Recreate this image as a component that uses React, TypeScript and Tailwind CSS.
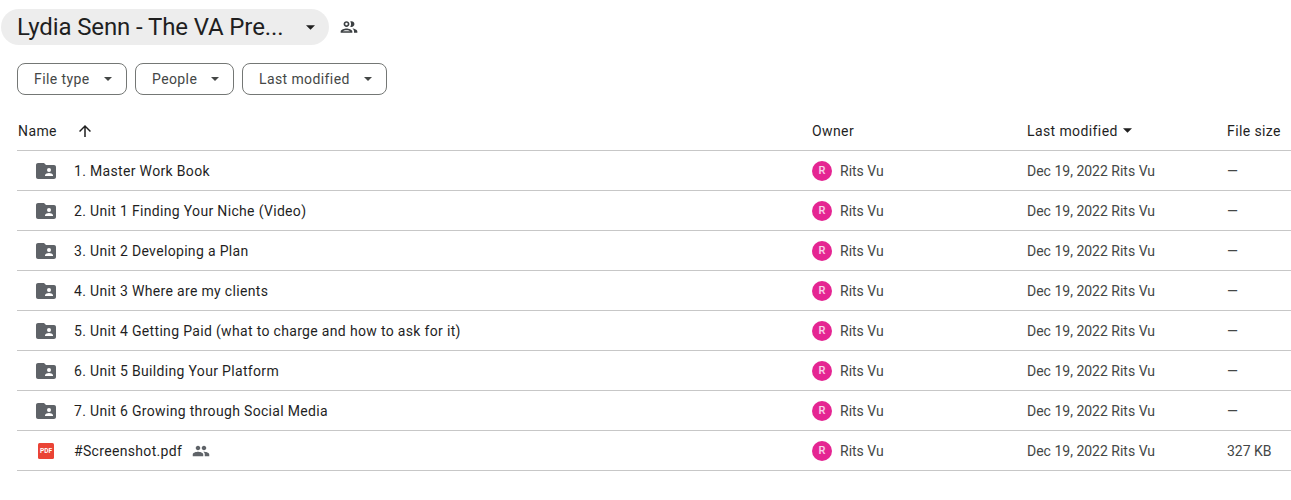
const rows = [
    "1. Master Work Book",
    "2. Unit 1 Finding Your Niche (Video)",
    "3. Unit 2 Developing a Plan",
    "4. Unit 3 Where are my clients",
    "5. Unit 4 Getting Paid (what to charge and how to ask for it)",
    "6. Unit 5 Building Your Platform",
    "7. Unit 6 Growing through Social Media",
];

function Caret({ className }: { className: string }) {
    return (
        <svg viewBox="0 0 10 5" className={className} fill="currentColor">
            <path d="M0 0l5 5 5-5z" />
        </svg>
    );
}

function FolderIcon() {
    return (
        <svg viewBox="0 0 20 16" className="w-5 h-4 text-[#5f6368]">
            <path fill="currentColor" d="M2 0h6l2 2h8c1.1 0 2 .9 2 2v10c0 1.1-.9 2-2 2H2c-1.1 0-2-.9-2-2V2C0 .9.9 0 2 0z" />
            <circle cx="13" cy="7" r="2" fill="#fff" />
            <path fill="#fff" d="M9 12.2c0-1.4 2.7-2.2 4-2.2s4 .8 4 2.2V13H9z" />
        </svg>
    );
}

function PdfIcon() {
    return (
        <svg viewBox="0 0 16 16" className="w-4 h-4">
            <rect width="16" height="16" rx="1.5" fill="#ea4335" />
            <text x="8" y="10.4" textAnchor="middle" fontSize="6.6" fontWeight="700" fill="#fff" fontFamily="Roboto, sans-serif">PDF</text>
        </svg>
    );
}

function PeopleFilled() {
    return (
        <svg viewBox="0 0 24 24" className="w-[18px] h-[18px] text-[#5f6368]" fill="currentColor">
            <path d="M16 11c1.66 0 2.99-1.34 2.99-3S17.66 5 16 5s-3 1.34-3 3 1.34 3 3 3zm-8 0c1.66 0 2.99-1.34 2.99-3S9.66 5 8 5 5 6.34 5 8s1.34 3 3 3zm0 2c-2.33 0-7 1.17-7 3.5V19h14v-2.5C15 14.17 10.33 13 8 13zm8 0c-.29 0-.62.02-.97.05 1.16.84 1.97 1.97 1.97 3.45V19h6v-2.5c0-2.33-4.67-3.5-7-3.5z" />
        </svg>
    );
}

function PeopleOutline() {
    return (
        <svg viewBox="0 0 24 24" className="w-5 h-5 text-[#3c4043]" fill="currentColor">
            <path d="M9 13.75c-2.34 0-7 1.17-7 3.5V19h14v-1.75c0-2.33-4.66-3.5-7-3.5zM4.34 17c.84-.58 2.87-1.25 4.66-1.25s3.82.67 4.66 1.25H4.34zM9 12c1.93 0 3.5-1.57 3.5-3.5S10.93 5 9 5 5.5 6.57 5.5 8.5 7.07 12 9 12zm0-5c.83 0 1.5.67 1.5 1.5S9.83 10 9 10s-1.5-.67-1.5-1.5S8.17 7 9 7zm7.04 6.81c1.16.84 1.96 1.96 1.96 3.44V19h4v-1.75c0-2.02-3.5-3.17-5.96-3.44zM15 12c1.93 0 3.5-1.57 3.5-3.5S16.93 5 15 5c-.54 0-1.04.13-1.5.35.63.89 1 1.98 1 3.15s-.37 2.26-1 3.15c.46.22.96.35 1.5.35z" />
        </svg>
    );
}

function Chip({ label, width }: { label: string; width: string }) {
    return (
        <div className={`${width} h-8 flex items-center justify-between pl-4 pr-[14px] border border-[#747775] rounded-lg text-sm tracking-[0.4px] text-[#444746]`}>
            <span>{label}</span>
            <Caret className="w-2 h-1" />
        </div>
    );
}

function Row({ icon, name, shared, size }: { icon: React.ReactNode; name: string; shared?: boolean; size: string }) {
    return (
        <div className="flex items-center h-10 border-b border-[#c7c7c7] text-sm">
            <div className="w-[795px] flex items-center shrink-0">
                <div className="w-[57px] flex justify-center">{icon}</div>
                <span className="text-[#1f1f1f] tracking-[0.33px]">{name}</span>
                {shared && <span className="ml-[10px] flex"><PeopleFilled /></span>}
            </div>
            <div className="w-[215px] flex items-center shrink-0 text-[#444746]">
                <div className="w-5 h-5 rounded-full bg-[#e52592] text-white/80 text-[11px] font-medium flex items-center justify-center">R</div>
                <span className="ml-2">Rits Vu</span>
            </div>
            <div className="w-[200px] shrink-0 text-[#444746]">Dec 19, 2022 Rits Vu</div>
            <div className="text-[#444746]">{size}</div>
        </div>
    );
}

export default function App() {
    return (
        <div className="h-[500px] bg-white pl-[17px] font-['Roboto',sans-serif] overflow-hidden">
            {/* タイトル */}
            <div className="flex items-center pt-[9px]">
                <div className="-ml-4 w-[328px] h-9 flex items-center justify-between pl-4 pr-[14px] rounded-full bg-[#ededed] text-[24px] tracking-[-0.12px] text-[#1f1f1f]">
                    <span>Lydia Senn - The VA Pre...</span>
                    <Caret className="w-[9px] h-[5px]" />
                </div>
                <div className="ml-[10px]"><PeopleOutline /></div>
            </div>

            {/* フィルター */}
            <div className="flex gap-2 mt-[18px]">
                <Chip label="File type" width="w-[110px]" />
                <Chip label="People" width="w-[99px]" />
                <Chip label="Last modified" width="w-[145px]" />
            </div>

            {/* テーブル */}
            <div className="mt-4">
                <div className="flex items-center h-10 border-b border-[#c7c7c7] text-sm tracking-[0.4px] text-[#1f1f1f]">
                    <div className="w-[795px] flex items-center shrink-0">
                        <span className="ml-px">Name</span>
                        <svg viewBox="0 0 24 24" className="ml-[19px] w-[18px] h-[18px]" fill="currentColor">
                            <path d="M4 12l1.41 1.41L11 7.83V20h2V7.83l5.58 5.59L20 12l-8-8z" />
                        </svg>
                    </div>
                    <div className="w-[215px] shrink-0">Owner</div>
                    <div className="w-[200px] shrink-0 flex items-center">
                        <span>Last modified</span>
                        <Caret className="ml-[5px] w-[9px] h-[5px]" />
                    </div>
                    <div>File size</div>
                </div>
                {rows.map((name) => (
                    <Row key={name} icon={<FolderIcon />} name={name} size="—" />
                ))}
                <Row icon={<PdfIcon />} name="#Screenshot.pdf" shared size="327 KB" />
            </div>
        </div>
    );
}
